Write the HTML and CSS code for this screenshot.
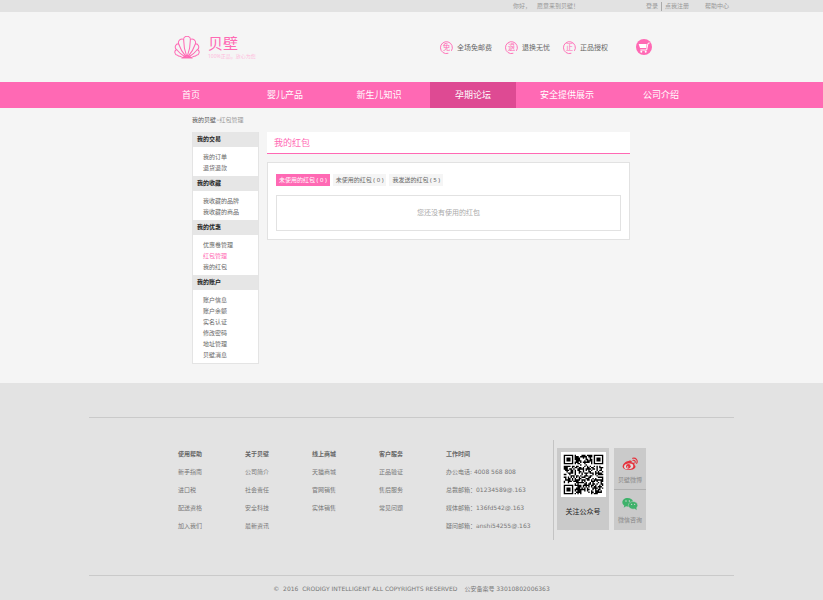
FILE: index.html
```html
<!DOCTYPE html>
<html lang="zh-CN">
<head>
  <meta charset="UTF-8">
  <meta name="viewport" content="width=device-width, initial-scale=1">
  <title>我的红包 - 贝壁</title>
  <link rel="stylesheet" href="styles.css">
</head>
<body>
  <div class="topbar">
    <div class="container topbar-inner">
      <div class="welcome"><span>你好，</span><span>愿意来到贝壁！</span></div>
      <div class="top-links">
        <a class="login" href="#">登录</a>
        <a class="register" href="#">点我注册</a>
        <a class="help" href="#">帮助中心</a>
      </div>
    </div>
  </div>

  <header class="container header">
    <a class="logo" href="#">
      <svg class="logo-shell" viewBox="0 0 76 68" fill="none" stroke="#ff69b4" stroke-width="3">
        <!-- scalloped edge -->
        <path d="M26 64 L17 60 Q12 60 10 57 A9 9 0 0 1 7 40 A9.5 9.5 0 0 1 13 23 A11 11 0 0 1 28 10 A10 9 0 0 1 48 10 A11 11 0 0 1 63 23 A9.5 9.5 0 0 1 69 40 A9 9 0 0 1 66 57 Q64 60 59 60 L50 64"/>
        <!-- ribs -->
        <path d="M28 10 Q28 36 37 60 M48 10 Q48 36 39 60 M13 23 Q20 44 35 61 M63 23 Q56 44 41 61 M7 40 Q18 54 33 62 M69 40 Q58 54 43 62"/>
        <path d="M22 66 Q30 57 38 60 Q46 57 54 66 Z" fill="#ff69b4" stroke-width="1"/>
      </svg>
      <span class="logo-text">
        <span class="logo-name">贝壁</span>
        <span class="logo-slogan">100%正品，放心为您</span>
      </span>
    </a>
    <div class="header-right">
      <ul class="services">
        <li>
          <svg class="ring" viewBox="0 0 14 14"><path d="M9 13.2 A6.4 6.4 0 1 1 12.3 10.6"/><text x="7" y="10">免</text></svg>
          全场免邮费
        </li>
        <li>
          <svg class="ring" viewBox="0 0 14 14"><path d="M9 13.2 A6.4 6.4 0 1 1 12.3 10.6"/><text x="7" y="10">退</text></svg>
          退换无忧
        </li>
        <li>
          <svg class="ring" viewBox="0 0 14 14"><path d="M9 13.2 A6.4 6.4 0 1 1 12.3 10.6"/><text x="7" y="10">正</text></svg>
          正品授权
        </li>
      </ul>
      <a class="cart" href="#" aria-label="购物车">
        <svg viewBox="0 0 48 48">
          <circle cx="24" cy="24" r="24" fill="#ff69b4"/>
          <path d="M8 15 L32 15 L31 27 L12 27 Z" fill="#fff"/>
          <path d="M41 12 L36 13 L32 33 L13 33" fill="none" stroke="#fff" stroke-width="3"/>
          <circle cx="16" cy="38" r="3" fill="#fff"/>
          <circle cx="29" cy="38" r="3" fill="#fff"/>
        </svg>
      </a>
    </div>
  </header>

  <nav class="nav">
    <div class="container nav-list">
      <a href="#">首页</a>
      <a href="#">婴儿产品</a>
      <a href="#">新生儿知识</a>
      <a href="#" class="active">孕期论坛</a>
      <a href="#">安全提供展示</a>
      <a href="#">公司介绍</a>
    </div>
  </nav>

  <div class="container page">
    <div class="breadcrumb"><a href="#">我的贝壁</a><span>&gt;红包管理</span></div>
    <div class="columns">
      <aside class="sidebar">
        <h3>我的交易</h3>
        <ul>
          <li><a href="#">我的订单</a></li>
          <li><a href="#">退货退款</a></li>
        </ul>
        <h3>我的收藏</h3>
        <ul>
          <li><a href="#">我收藏的品牌</a></li>
          <li><a href="#">我收藏的商品</a></li>
        </ul>
        <h3>我的优惠</h3>
        <ul>
          <li><a href="#">优惠卷管理</a></li>
          <li><a href="#" class="current">红包管理</a></li>
          <li><a href="#">我的红包</a></li>
        </ul>
        <h3>我的账户</h3>
        <ul>
          <li><a href="#">账户信息</a></li>
          <li><a href="#">账户余额</a></li>
          <li><a href="#">实名认证</a></li>
          <li><a href="#">修改密码</a></li>
          <li><a href="#">地址管理</a></li>
          <li><a href="#">贝壁消息</a></li>
        </ul>
      </aside>

      <main class="main">
        <h2>我的红包</h2>
        <div class="panel">
          <div class="tabs">
            <button type="button" class="selected">未使用的红包 ( 0 )</button>
            <button type="button">未使用的红包 ( 0 )</button>
            <button type="button">我发送的红包 ( 5 )</button>
          </div>
          <div class="empty">您还没有使用的红包</div>
        </div>
      </main>
    </div>
  </div>

  <footer class="footer">
    <div class="container">
      <div class="footer-main">
        <div class="footer-col">
          <h4>使用帮助</h4>
          <a href="#">新手指南</a>
          <a href="#">进口税</a>
          <a href="#">配送资格</a>
          <a href="#">加入我们</a>
        </div>
        <div class="footer-col">
          <h4>关于贝壁</h4>
          <a href="#">公司简介</a>
          <a href="#">社会责任</a>
          <a href="#">安全科技</a>
          <a href="#">最新资讯</a>
        </div>
        <div class="footer-col">
          <h4>线上商城</h4>
          <a href="#">天猫商城</a>
          <a href="#">官网销售</a>
          <a href="#">实体销售</a>
        </div>
        <div class="footer-col">
          <h4>客户服务</h4>
          <a href="#">正品验证</a>
          <a href="#">售后服务</a>
          <a href="#">常见问题</a>
        </div>
        <div class="footer-col contact">
          <h4>工作时间</h4>
          <p>办公电话: 4008 568 808</p>
          <p>总裁邮箱：01234589@.163</p>
          <p>媒体邮箱：136fd542@.163</p>
          <p>疑问邮箱：anshi54255@.163</p>
        </div>
        <div class="follow">
          <div class="qr-card">
            <svg id="qrCode" class="qr" viewBox="-2 -2 33 33"></svg>
            <span>关注公众号</span>
          </div>
          <div class="social">
            <a href="#">
              <svg viewBox="0 0 48 40">
                <path d="M20 11 C26 8 31 10 29 16 C36 15 40 19 37 23 C45 27 39 38 22 38 C8 38 1 32 2 26 C3 19 13 10 20 11 Z" fill="#e6323c"/>
                <ellipse cx="20" cy="27" rx="14" ry="8.5" transform="rotate(-8 20 27)" fill="#ddd"/>
                <circle cx="19" cy="27" r="7" fill="#e6323c"/>
                <circle cx="17" cy="29" r="2.4" fill="#ddd"/>
                <path d="M32 3 C41 0 49 9 44 18 M33 9 C38 8 41 12 39 16" fill="none" stroke="#e6323c" stroke-width="3.4" stroke-linecap="round"/>
              </svg>
              贝壁微博
            </a>
            <a href="#">
              <svg viewBox="0 0 48 40">
                <path d="M17 2 C7 2 1 8 1 15 C1 20 4 23 7 25 L5 31 L12 27 C14 28 17 28 20 28 C32 27 34 20 33 13 C32 6 25 2 17 2 Z" fill="#3fb26b"/>
                <ellipse cx="33" cy="24" rx="14" ry="11.5" fill="#3fb26b" stroke="#cacaca" stroke-width="1.5"/>
                <path d="M37 33 L44 39 L43 30 Z" fill="#3fb26b"/>
                <circle cx="12" cy="11" r="2" fill="#ddd"/>
                <circle cx="22" cy="11" r="2" fill="#ddd"/>
                <circle cx="29" cy="21" r="1.8" fill="#ddd"/>
                <circle cx="38" cy="21" r="1.8" fill="#ddd"/>
              </svg>
              微信咨询
            </a>
          </div>
        </div>
      </div>
      <div class="copyright">
        <span>©&nbsp; 2016&nbsp; CRODIGY INTELLIGENT ALL COPYRIGHTS RESERVED</span>
        <span>公安备案号 33010802006363</span>
      </div>
    </div>
  </footer>
  <script src="script.js"></script>
</body>
</html>
```

FILE: styles.css
```css
* {
  box-sizing: border-box;
}

body {
  margin: 0;
  background: #f5f5f5;
  color: #666;
  font-family: "Noto Sans", "Noto Sans CJK SC", sans-serif;
  font-size: 6px;
  line-height: 11px;
}

a {
  color: inherit;
  text-decoration: none;
}

ul {
  list-style: none;
  margin: 0;
  padding: 0;
}

h2, h3, h4, p {
  margin: 0;
}

.container {
  max-width: 645px;
  margin: 0 auto;
}

/* Top bar */
.topbar {
  background: #e2e2e2;
  color: #999;
}

.topbar-inner {
  display: flex;
  justify-content: flex-end;
  gap: 67px;
  padding: 1px 5px 0 0;
}

.welcome {
  display: flex;
  gap: 6px;
}

.top-links {
  display: flex;
  align-items: center;
}

.register {
  margin-left: 3px;
  padding-left: 3px;
  border-left: 1px solid #aaa;
  line-height: 9px;
}

.help {
  margin-left: 16px;
}

/* Header */
.header {
  display: flex;
  align-items: center;
  justify-content: space-between;
  height: 70px;
  padding: 0 82px 0 85px;
}

.logo {
  display: flex;
  align-items: center;
  gap: 8px;
  color: #ff69b4;
}

.logo-shell {
  width: 26px;
  height: 23px;
}

.logo-text {
  display: flex;
  flex-direction: column;
  padding-bottom: 2px;
}

.logo-name {
  font-size: 15px;
  line-height: 20px;
}

.logo-slogan {
  color: #ffb9dc;
  font-size: 5px;
  line-height: 7px;
}

.header-right {
  display: flex;
  align-items: center;
  gap: 28px;
}

.services {
  display: flex;
  gap: 13px;
  font-size: 7px;
}

.services li {
  display: flex;
  align-items: center;
  gap: 4px;
}

.ring {
  width: 13px;
  height: 13px;
  overflow: visible;
}

.ring path {
  fill: none;
  stroke: #ff69b4;
}

.ring text {
  fill: #ff69b4;
  font-size: 8px;
  text-anchor: middle;
}

.cart,
.cart svg {
  display: block;
  width: 16px;
  height: 16px;
}

/* Navigation */
.nav {
  background: #ff69b4;
}

.nav-list {
  display: grid;
  grid-template-columns: repeat(6, 1fr);
  gap: 8px;
  padding: 0 30px 0 59px;
}

.nav a {
  color: #fff;
  font-size: 9px;
  line-height: 26px;
  text-align: center;
}

.nav .active {
  background: #de4a93;
}

/* Page */
.page {
  padding: 7px 104px 19px 103px;
}

.breadcrumb {
  margin-bottom: 6px;
  color: #999;
}

.breadcrumb a {
  color: #555;
}

.columns {
  display: flex;
  align-items: flex-start;
  gap: 8px;
}

.sidebar {
  flex: 0 0 67px;
  border: 1px solid #e4e4e4;
  border-top: none;
  background: #fff;
}

.sidebar h3 {
  padding-left: 4px;
  background: #e6e6e6;
  color: #222;
  font-size: 6px;
  line-height: 15px;
}

.sidebar ul {
  padding: 5px 0 2px 10px;
}

.sidebar .current {
  color: #ff69b4;
}

.main {
  flex: 1;
}

.main h2 {
  padding-left: 7px;
  border-bottom: 1px solid #ff69b4;
  background: #fff;
  color: #ff69b4;
  font-size: 9px;
  font-weight: normal;
  line-height: 21px;
}

.panel {
  margin-top: 8px;
  padding: 11px 8px 8px;
  border: 1px solid #e2e2e2;
  background: #fff;
}

.tabs {
  display: flex;
  gap: 3px;
}

.tabs button {
  padding: 0 3px;
  border: none;
  background: #f5f5f5;
  color: #666;
  font: inherit;
  line-height: 12px;
  cursor: pointer;
}

.tabs .selected {
  background: #ff69b4;
  color: #fff;
}

.empty {
  margin-top: 9px;
  border: 1px solid #e2e2e2;
  color: #aaa;
  font-size: 7px;
  line-height: 34px;
  text-align: center;
}

/* Footer */
.footer {
  padding-top: 34px;
  background: #e3e3e3;
  color: #777;
  font-family: "DejaVu Sans", "Noto Sans CJK SC", sans-serif;
}

.footer-main {
  display: flex;
  padding: 22px 88px 35px 89px;
  border-top: 1px solid #cacaca;
  border-bottom: 1px solid #cacaca;
}

.footer-col {
  flex: 0 0 67px;
  padding-top: 5px;
  line-height: 18px;
}

.footer-col h4 {
  color: #666;
  font-size: 6px;
}

.footer-col a {
  display: block;
}

.contact {
  flex: 1;
}

.contact p {
  white-space: nowrap;
}

.follow {
  display: flex;
  align-items: flex-start;
  gap: 5px;
  height: 100px;
  padding: 8px 0 0 3px;
  border-left: 1px solid #c4c4c4;
}

.qr-card {
  display: flex;
  flex-direction: column;
  align-items: center;
  gap: 10px;
  width: 52px;
  height: 82px;
  padding-top: 4px;
  background: #cacaca;
  color: #222;
  font-size: 7px;
}

.qr {
  width: 45px;
  height: 45px;
  background: #fff;
}

.social a {
  display: flex;
  flex-direction: column;
  align-items: center;
  gap: 3px;
  width: 32px;
  height: 41px;
  padding-top: 9px;
  background: #cacaca;
  color: #888;
}

.social a + a {
  padding-top: 7px;
  border-top: 1px solid #b0b0b0;
}

.social svg {
  width: 16px;
  height: 14px;
}

.copyright {
  display: flex;
  justify-content: center;
  gap: 7px;
  padding: 7px 0;
}
```

FILE: script.js
```javascript
const SIZE = 29;

// Finder pattern in three of the corners, null outside of them
function finder(x, y) {
  const corners = [[0, 0], [SIZE - 7, 0], [0, SIZE - 7]];
  for (const [cx, cy] of corners) {
    const dx = x - cx;
    const dy = y - cy;
    if (dx >= -1 && dx <= 7 && dy >= -1 && dy <= 7) {
      const ring = Math.max(Math.abs(dx - 3), Math.abs(dy - 3));
      return ring === 3 || ring <= 1;
    }
  }
  return null;
}

function drawQr() {
  let seed = 2016;
  let d = '';
  for (let y = 0; y < SIZE; y++) {
    for (let x = 0; x < SIZE; x++) {
      seed = (seed * 16807) % 2147483647;
      const fixed = finder(x, y);
      const dark = fixed === null ? seed / 2147483647 > 0.46 : fixed;
      if (dark) {
        d += `M${x} ${y}h1v1h-1z`;
      }
    }
  }
  document.getElementById('qrCode').innerHTML = `<path d="${d}"/>`;
}

drawQr();
```
